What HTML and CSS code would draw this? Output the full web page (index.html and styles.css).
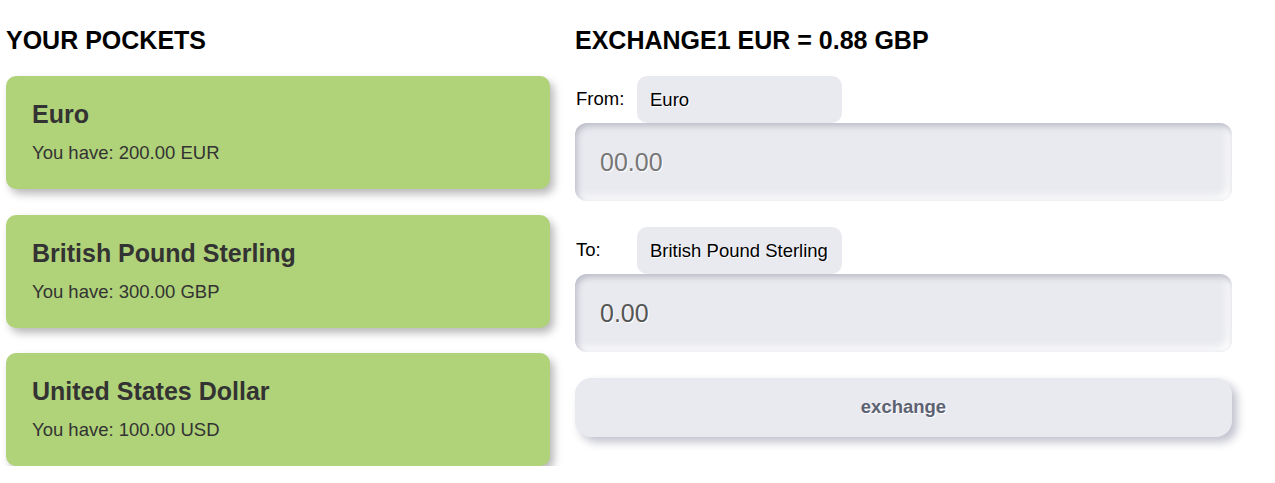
FILE: index.html
```html
<!DOCTYPE html>
<html lang="en">
<head>
<meta charset="utf-8">
<title>Pockets</title>
<link rel="stylesheet" href="styles.css">
</head>
<body>
<main class="page">
  <section class="pockets">
    <h2 class="heading">YOUR POCKETS</h2>
    <div class="card">
      <h3 class="card-title">Euro</h3>
      <p class="card-text">You have: 200.00 EUR</p>
    </div>
    <div class="card">
      <h3 class="card-title">British Pound Sterling</h3>
      <p class="card-text">You have: 300.00 GBP</p>
    </div>
    <div class="card">
      <h3 class="card-title">United States Dollar</h3>
      <p class="card-text">You have: 100.00 USD</p>
    </div>
  </section>
  <section class="exchange">
    <h2 class="heading">EXCHANGE1 EUR = 0.88 GBP</h2>
    <div class="group">
      <div class="row">
        <label class="label">From:</label>
        <select class="select"><option>Euro</option></select>
      </div>
      <input class="amount" type="text" placeholder="00.00">
    </div>
    <div class="group">
      <div class="row">
        <label class="label">To:</label>
        <select class="select"><option>British Pound Sterling</option></select>
      </div>
      <input class="amount filled" type="text" value="0.00">
    </div>
    <button class="btn" type="button">exchange</button>
  </section>
</main>
</body>
</html>
```
FILE: styles.css
```css
* { box-sizing: border-box; }
html, body { margin: 0; padding: 0; background: #fff; }
body { font-family: "Liberation Sans", Arial, sans-serif; color: #000; }

.page {
  display: grid;
  grid-template-columns: 544px 657px;
  column-gap: 25px;
  padding: 0 6px;
  align-items: start;
}

.heading {
  font-size: 25px;
  line-height: 29px;
  font-weight: bold;
  margin: 26px 0 21px;
  color: #000;
}

.pockets { display: flex; flex-direction: column; }

.card {
  background: #b0d279;
  border-radius: 10px;
  padding: 24px 26px 26px;
  margin-bottom: 25.5px;
  box-shadow: 4px 5px 8px rgba(0, 0, 0, 0.28);
  color: #333;
}
.card:last-child { margin-bottom: 0; }

.card-title {
  margin: 0 0 13px;
  font-size: 25px;
  line-height: 29px;
  font-weight: bold;
}
.card-text {
  margin: 0;
  font-size: 18.5px;
  line-height: 21px;
}

.exchange { display: flex; flex-direction: column; }

.group { display: flex; flex-direction: column; margin-bottom: 26px; }

.row { display: flex; align-items: center; height: 47px; }

.label {
  width: 62px;
  font-size: 18.5px;
  color: #000;
  padding-left: 1px;
  margin-top: -2px;
}

.select {
  appearance: none;
  -webkit-appearance: none;
  border: none;
  outline: none;
  width: 205px;
  height: 47px;
  padding: 0 13px;
  background: #e9eaef;
  border-radius: 10px;
  font-family: "Liberation Sans", Arial, sans-serif;
  font-size: 18.5px;
  color: #000;
  text-shadow: 1px 1px 0 #fff;
}

.amount {
  width: 657px;
  height: 78px;
  border: none;
  outline: none;
  border-radius: 12px;
  background: #e9eaef;
  padding: 0 25px;
  font-family: "Liberation Sans", Arial, sans-serif;
  font-size: 25px;
  color: #555;
  text-shadow: 1px 1px 0 #fff;
  box-shadow: inset 2px 3px 6px #b9bac6, inset -4px -4px 8px #ffffff;
}
.amount::placeholder { color: #777; }

.btn {
  width: 657px;
  height: 59px;
  border: none;
  border-radius: 16px;
  background: #e9eaef;
  font-family: "Liberation Sans", Arial, sans-serif;
  font-size: 18.5px;
  font-weight: bold;
  color: #5d6272;
  text-shadow: 1px 1px 0 #fff;
  padding-bottom: 2px;
  box-shadow: 5px 5px 10px #bfc0cc, -4px -4px 8px #ffffff;
}
```
